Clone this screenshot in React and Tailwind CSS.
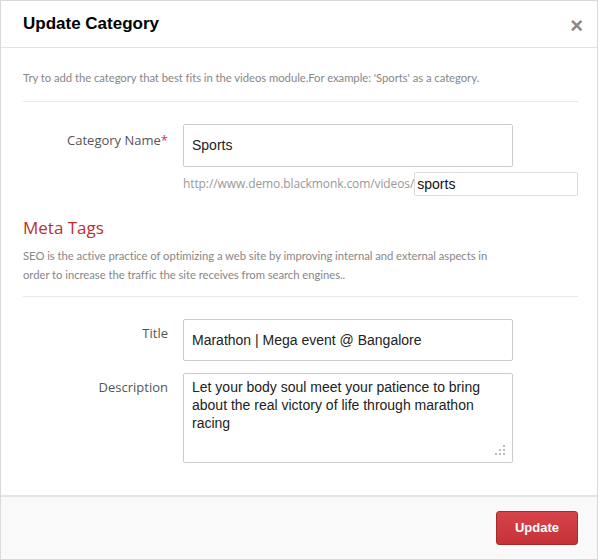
export default function App() {
  const sans = { fontFamily: '"Open Sans", "Noto Sans", sans-serif' };
  const para = { fontFamily: 'Lato, "Open Sans", sans-serif' };
  const arial = { fontFamily: '"Liberation Sans", Arial, sans-serif' };
  return (
    <div className="w-[598px] h-[560px] bg-white border border-[#d9d9d9] flex flex-col" style={sans}>
      <div className="h-[47px] border-b border-[#e3e3e3] flex items-center justify-between pl-[22px] pr-[14px] shrink-0">
        <h1 className="text-[17px] font-bold text-black" style={arial}>Update Category</h1>
        <span className="text-[22px] font-bold text-[#888] leading-none mt-[4px]" style={arial}>×</span>
      </div>
      <div className="flex-1 pl-[22px] pr-[19px] pt-[20px]">
        <p className="text-[11.3px] tracking-[-0.05px] text-[#878787] leading-[20px] pb-[13px] border-b border-[#e8e8e8]" style={para}>
          Try to add the category that best fits in the videos module.For example: 'Sports' as a category.
        </p>
        <div className="flex mt-[22px]">
          <label className="w-[145px] text-right text-[13px] text-[#555] pt-[7px] shrink-0">
            Category Name<span className="text-[#d33]">*</span>
          </label>
          <div className="ml-[15px] flex-1">
            <div className="w-[330px] h-[43px] border border-[#ccc] rounded-[2px] flex items-center px-[8px] text-[14px] text-[#222]" style={arial}>Sports</div>
            <div className="flex items-center mt-[5px]">
              <span className="text-[12px] text-[#999] tracking-[-0.1px]">http://www.demo.blackmonk.com/videos/</span>
              <div className="flex-1 h-[24px] border border-[#ddd] rounded-[2px] flex items-center px-[2px] text-[14px] text-[#111]" style={arial}>sports</div>
            </div>
          </div>
        </div>
        <h2 className="text-[17px] text-[#b8312f] mt-[20px] leading-[24px]">Meta Tags</h2>
        <p className="text-[11.3px] tracking-[-0.05px] text-[#878787] leading-[19px] mt-[6px] pb-[12px] border-b border-[#e8e8e8]" style={para}>
          SEO is the active practice of optimizing a web site by improving internal and external aspects in
          <br />
          order to increase the traffic the site receives from search engines..
        </p>
        <div className="flex mt-[22px]">
          <label className="w-[145px] text-right text-[13px] text-[#555] pt-[5px] shrink-0">Title</label>
          <div className="ml-[15px] w-[330px] h-[42px] border border-[#ccc] rounded-[2px] flex items-center px-[8px] text-[14px] text-[#222]" style={arial}>Marathon | Mega event @ Bangalore</div>
        </div>
        <div className="flex mt-[12px]">
          <label className="w-[145px] text-right text-[13px] text-[#555] pt-[5px] shrink-0">Description</label>
          <div className="ml-[15px] w-[330px] h-[90px] border border-[#ccc] rounded-[2px] px-[8px] pt-[4px] text-[14px] text-[#222] leading-[18px] relative" style={arial}>
            Let your body soul meet your patience to bring about the real victory of life through marathon racing
            <svg className="absolute right-[6px] bottom-[6px]" width="12" height="12" viewBox="0 0 12 12">
              <rect x="9" y="1" width="2" height="2" fill="#bbb" />
              <rect x="5" y="5" width="2" height="2" fill="#bbb" />
              <rect x="9" y="5" width="2" height="2" fill="#bbb" />
              <rect x="1" y="9" width="2" height="2" fill="#bbb" />
              <rect x="5" y="9" width="2" height="2" fill="#bbb" />
              <rect x="9" y="9" width="2" height="2" fill="#bbb" />
            </svg>
          </div>
        </div>
      </div>
      <div className="h-[64px] border-t-2 border-[#e5e5e5] bg-[#f9f9f9] flex items-center justify-end pr-[19px] shrink-0">
        <button className="w-[82px] h-[34px] rounded-[3px] border border-[#a92a2e] bg-gradient-to-b from-[#d6434a] to-[#c53338] text-white text-[13px] font-bold" style={arial}>Update</button>
      </div>
    </div>
  );
}
